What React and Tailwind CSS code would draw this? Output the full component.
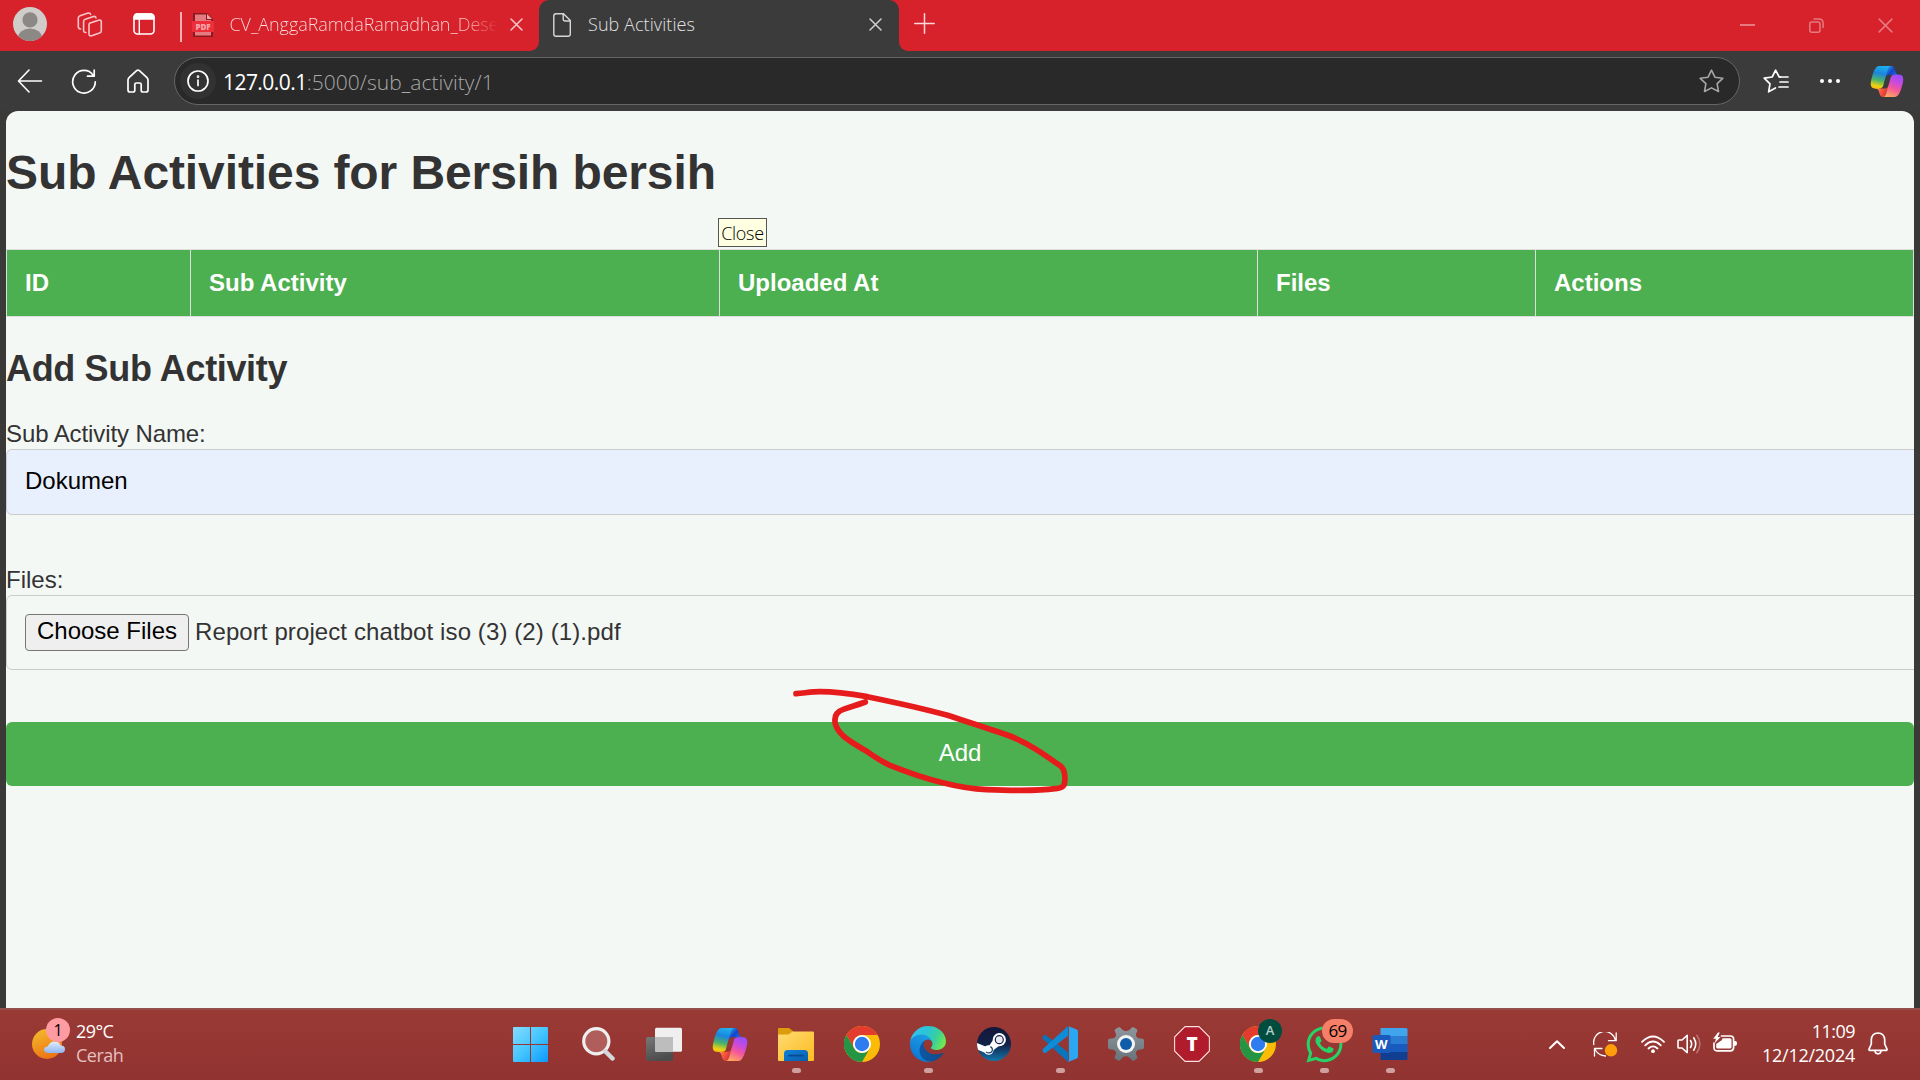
import React from 'react';
import { FaWhatsapp } from 'react-icons/fa';

const stroke = { fill: 'none', stroke: 'currentColor', strokeLinecap: 'round', strokeLinejoin: 'round' };

/* ---------- shared logos ---------- */

function CopilotLogo({ id, className }) {
  return (
    <svg className={className} viewBox="1 4 46 40" preserveAspectRatio="none">
      <defs>
        <linearGradient id={`${id}a`} x1="0.9" y1="0.6" x2="0.2" y2="0">
          <stop offset="0" stopColor="#2a6be8" />
          <stop offset="0.5" stopColor="#1145c9" />
          <stop offset="1" stopColor="#2a9be8" />
        </linearGradient>
        <linearGradient id={`${id}b`} x1="0" y1="0.3" x2="1" y2="0.8">
          <stop offset="0" stopColor="#ffb657" />
          <stop offset="0.4" stopColor="#ff5f3d" />
          <stop offset="1" stopColor="#c02b3c" />
        </linearGradient>
        <linearGradient id={`${id}c`} x1="0.6" y1="0" x2="0.4" y2="1">
          <stop offset="0" stopColor="#1fb0ee" />
          <stop offset="0.35" stopColor="#1b85dd" />
          <stop offset="0.65" stopColor="#4bb26a" />
          <stop offset="0.9" stopColor="#e4d215" />
          <stop offset="1" stopColor="#fbc40c" />
        </linearGradient>
        <linearGradient id={`${id}d`} x1="0.7" y1="0" x2="0.3" y2="1">
          <stop offset="0" stopColor="#9a4dff" />
          <stop offset="0.3" stopColor="#c64ade" />
          <stop offset="0.6" stopColor="#f4579c" />
          <stop offset="1" stopColor="#ffa85c" />
        </linearGradient>
      </defs>
      <path fill={`url(#${id}a)`} d="M34.14 7.33C33.56 5.35 31.75 4 29.69 4L28.33 4C26.1 4 24.19 5.59 23.79 7.78L21.43 20.62L22.02 18.62C22.6 16.62 24.43 15.25 26.51 15.25L34.44 15.25L37.78 16.55L41 15.25H40.07C38.01 15.25 36.2 13.9 35.62 11.93Z" />
      <path fill={`url(#${id}b)`} d="M14.33 40.66C14.9 42.64 16.72 44 18.78 44H21.66C24.17 44 26.22 41.99 26.28 39.48L26.59 27.33L25.94 29.56C25.35 31.55 23.52 32.92 21.45 32.92L13.45 32.92L10.59 31.38L7.5 32.92H8.43C10.49 32.92 12.3 34.29 12.88 36.27Z" />
      <path fill={`url(#${id}c)`} d="M29.5 4H13.46C8.88 4 6.13 10.05 4.3 16.11C2.13 23.28-.71 32.88 7.5 32.88H14.43C16.5 32.88 18.32 31.52 18.89 29.53C20.09 25.34 22.19 18.04 23.84 12.48C24.68 9.66 25.38 7.23 26.45 5.72C27.06 4.87 28.06 4 29.5 4Z" />
      <path fill={`url(#${id}d)`} d="M18.5 44H34.53C39.11 44 41.86 37.95 43.7 31.89C45.87 24.72 48.7 15.13 40.49 15.13H33.57C31.5 15.13 29.68 16.49 29.1 18.48C27.9 22.67 25.8 29.96 24.15 35.52C23.32 38.34 22.62 40.77 21.54 42.28C20.94 43.13 19.94 44 18.5 44Z" />
    </svg>
  );
}

function ChromeLogo() {
  return (
    <svg className="h-9 w-9" viewBox="0 0 48 48">
      <circle cx="24" cy="24" r="24" fill="#fbbc08" />
      <path fill="#e33b2e" d="M3.2 12A24 24 0 0 1 44.8 12H24A12 12 0 0 0 13.6 30Z" />
      <path fill="#249445" d="M3.2 12A24 24 0 0 0 24 48L34.4 30A12 12 0 0 1 13.6 30Z" />
      <circle cx="24" cy="24" r="12" fill="#fff" />
      <circle cx="24" cy="24" r="9.6" fill="#2f7bf0" />
    </svg>
  );
}

function EdgeLogo() {
  return (
    <svg className="h-9 w-9" viewBox="0 0 256 256">
      <defs>
        <linearGradient id="edgeDark" x1="0" y1="0.5" x2="1" y2="0.6">
          <stop offset="0" stopColor="#0c59a4" />
          <stop offset="1" stopColor="#114a8b" />
        </linearGradient>
        <linearGradient id="edgeMid" x1="0.7" y1="0.1" x2="0.3" y2="1">
          <stop offset="0" stopColor="#1b9de2" />
          <stop offset="0.5" stopColor="#1588db" />
          <stop offset="1" stopColor="#0a74d4" />
        </linearGradient>
        <linearGradient id="edgeTop" x1="0" y1="0.3" x2="1" y2="0.6">
          <stop offset="0" stopColor="#35c1f1" />
          <stop offset="0.4" stopColor="#2cc4d6" />
          <stop offset="0.7" stopColor="#36d0a0" />
          <stop offset="1" stopColor="#74e84a" />
        </linearGradient>
      </defs>
      <path fill="url(#edgeDark)" d="M231 190.5c-3.4 1.8-6.9 3.4-10.5 4.7a101.5 101.5 0 0 1-35.9 6.4c-47.3 0-88.5-32.5-88.5-74.3a31.5 31.5 0 0 1 16.4-27.3c-42.8 1.8-53.8 46.4-53.8 72.5 0 73.9 68.1 81.4 82.8 81.4 7.9 0 19.8-2.3 27-4.6l1.3-.4a128.3 128.3 0 0 0 66.6-52.8 4 4 0 0 0-5.4-5.6Z" />
      <path fill="url(#edgeMid)" d="M105.7 241.4a79.2 79.2 0 0 1-22.7-21.3 80.7 80.7 0 0 1 29.5-120c3.2-1.5 8.5-4.1 15.6-4a32.4 32.4 0 0 1 25.7 13 31.9 31.9 0 0 1 6.3 18.7c0-.2 24.5-79.6-80-79.6-43.9 0-80 41.6-80 78.2a130.2 130.2 0 0 0 12.1 56 128 128 0 0 0 156.4 67 75.5 75.5 0 0 1-62.8-8Z" />
      <path fill="url(#edgeTop)" d="M152.3 148.9c-.9 1-3.4 2.5-3.4 5.7 0 2.6 1.7 5.2 4.8 7.3 14.3 10 41.4 8.6 41.5 8.6a59.6 59.6 0 0 0 30.3-8.3 61.4 61.4 0 0 0 30.4-52.9c.3-22.4-8-37.3-11.3-43.9C223.5 23.9 177.7 0 128 0A128 128 0 0 0 0 126.2c.5-36.5 36.8-66 80-66 3.5 0 23.5.3 42 10.1 16.3 8.6 24.9 18.9 30.8 29.2 6.2 10.7 7.3 24.1 7.3 29.5 0 5.3-2.7 13.3-7.8 19.9Z" />
    </svg>
  );
}

/* ---------- browser chrome ---------- */

function CloseX({ className, w = 1.5 }) {
  return (
    <svg className={className} viewBox="0 0 13 13" {...stroke} strokeWidth={w}>
      <path d="M1 1l11 11M12 1L1 12" />
    </svg>
  );
}

function TabStrip() {
  return (
    <div className="flex h-[51px] bg-[#3b3b3b]">
      <div className="flex w-[539px] items-start rounded-br-[9px] bg-[#d7222c] pl-[13px]">
        <svg className="mt-[7px] h-[34px] w-[34px]" viewBox="0 0 34 34">
          <defs>
            <clipPath id="avatarClip"><circle cx="17" cy="17" r="17" /></clipPath>
          </defs>
          <g clipPath="url(#avatarClip)">
            <rect width="34" height="34" fill="#cfccc9" />
            <circle cx="17" cy="12.8" r="7.6" fill="#8b8885" />
            <ellipse cx="17" cy="31" rx="12" ry="9.5" fill="#8b8885" />
          </g>
        </svg>
        <svg className="ml-[30px] mt-3 h-[25px] w-[26px] text-[#f7c5c8]" viewBox="0 0 26 25" {...stroke} strokeWidth="1.6">
          <path d="M12.5 11.2L21.5 8.2Q24.3 7.4 24.3 10V18.5Q24.3 20.4 22.5 21.1L14.7 23.8Q12 24.5 12 22V12.9Q12 11.5 13 11.1Z" />
          <path d="M8.9 20.5Q6.6 20.6 6.6 18.2V9.6Q6.6 7.8 8.3 7.2L16.5 4.5Q18.4 4.1 19 5.8" />
          <path d="M3.6 17Q1.3 17 1.3 14.6V6.2Q1.3 4.4 3 3.8L11.2 1.1Q13 .7 13.6 2.3" />
        </svg>
        <svg className="ml-[30px] mt-[13px] h-[22px] w-[22px] text-white" viewBox="0 0 22 22" {...stroke} strokeWidth="1.6">
          <rect x="1" y="1" width="20" height="20" rx="3.5" />
          <path d="M1.2 6V4Q1.5 1.2 4 1H18Q20.8 1.3 20.9 4V6Z" fill="currentColor" />
          <path d="M6.3 6V21" strokeWidth="1.4" />
        </svg>
        <div className="ml-[25px] mt-3 h-[30px] w-[1.5px] bg-[#f0b0b4]" />
        <svg className="ml-[10px] mt-[13px] h-6 w-[22px]" viewBox="0 0 22 24">
          <path fill="#8e1820" d="M1 0H15L21 6V24H1Z" />
          <path fill="#e57b80" d="M3 1.5H14V7H19V22.5H3Z" />
          <path fill="#f0a7aa" d="M15 1L20 6H15Z" />
          <rect y="8" width="22" height="11" rx="1" fill="#ec2f3b" />
          <text x="11" y="16.6" textAnchor="middle" fontFamily="Open Sans, sans-serif" fontWeight="800" fontSize="8" fill="#f7a3a8">PDF</text>
        </svg>
        <div className="ml-4 mt-[11px] w-[267px] overflow-hidden whitespace-nowrap bg-gradient-to-r from-[#fbdcde] from-85% to-[#d7222c] bg-clip-text text-[18px] font-light leading-[26px] tracking-[-0.06px] text-transparent">
          CV_AnggaRamdaRamadhan_Dese
        </div>
        <CloseX className="ml-[13px] mt-[18px] h-[13px] w-[13px] text-[#f8c9cc]" />
      </div>

      <div className="flex w-[360px] bg-[#d7222c]">
        <div className="flex flex-1 items-start rounded-t-[10px] bg-[#3b3b3b] pl-3.5">
          <svg className="mt-[13px] h-6 w-[18px] text-[#d8d8d8]" viewBox="0 0 18 24" {...stroke} strokeWidth="1.4">
            <path d="M3 .8H10.5L17.3 7.6V21Q17.3 23.2 15 23.2H3Q.8 23.2 .8 21V3Q.8 .8 3 .8Z" />
            <path d="M10.2 1V6Q10.2 8 12.2 8H17" />
          </svg>
          <div className="ml-[17px] mt-[11px] flex-1 text-[18px] font-light leading-[26px] tracking-[0.07px] text-[#e0e0e0]">Sub Activities</div>
          <CloseX className="mr-[17px] mt-[18px] h-[13px] w-[13px] text-[#cfcfcf]" />
        </div>
      </div>

      <div className="flex flex-1 items-start rounded-bl-[9px] bg-[#d7222c] pl-[15px]">
        <svg className="mt-[13px] h-[21px] w-[21px] text-[#fbd9db]" viewBox="0 0 21 21" {...stroke} strokeWidth="1.5">
          <path d="M10.5 .8V20.2M.8 10.5H20.2" />
        </svg>
        <div className="flex-1" />
        <div className="mt-6 h-[2px] w-[15px] bg-[#e57a80]" />
        <svg className="ml-[54px] mt-[18px] h-[15px] w-[15px] text-[#e57a80]" viewBox="0 0 15 15" {...stroke} strokeWidth="1.5">
          <rect x=".8" y="4" width="10.2" height="10.2" rx="2" />
          <path d="M5 .9H10Q14.1 .9 14.1 5V9.5" />
        </svg>
        <CloseX className="ml-[54px] mr-[27px] mt-[18px] h-[15px] w-[15px] text-[#e57a80]" w={1.3} />
      </div>
    </div>
  );
}

function Toolbar() {
  return (
    <div className="flex h-[60px] items-center bg-[#3b3b3b] pl-[17px] text-white">
      <svg className="h-6 w-[26px]" viewBox="0 0 26 24" {...stroke} strokeWidth="1.6">
        <path d="M12 1L1.5 12L12 23M1.5 12H24.5" />
      </svg>
      <svg className="ml-[28px] h-[25px] w-[26px]" viewBox="0 0 26 25" {...stroke} strokeWidth="1.7">
        <path d="M22.2 6.2A11.3 11.3 0 1 0 24.3 12.8M23.2 1V7.2H16.5" />
      </svg>
      <svg className="ml-[30px] h-[24px] w-[22px]" viewBox="0 0 22 24" {...stroke} strokeWidth="1.7">
        <path d="M2.3 8.3L9.6 1.6Q11 .5 12.4 1.6L19.7 8.3Q21 9.5 21 11V21Q21 23 19 23H16Q14.2 23 14.2 21.2V15.5Q14.2 14 12.8 14H9.2Q7.8 14 7.8 15.5V21.2Q7.8 23 6 23H3Q1 23 1 21V11Q1 9.5 2.3 8.3Z" />
      </svg>
      <div className="ml-[25px] flex h-[48px] w-[1566px] items-center rounded-full border-[1.5px] border-[#666] bg-[#292929] pl-[5px]">
        <div className="flex h-9 w-9 items-center justify-center rounded-full bg-[#323232]">
          <svg className="h-[22px] w-[22px]" viewBox="0 0 22 22" {...stroke} strokeWidth="1.7">
            <circle cx="11" cy="11" r="10" />
            <path d="M11 10V15.5" />
            <circle cx="11" cy="6.7" r=".5" />
          </svg>
        </div>
        <div className="ml-[7px] flex-1 pt-[1px] text-[21px] leading-7">
          <span className="tracking-[-0.55px]">127.0.0.1</span>
          <span className="font-light tracking-[0.03px] text-[#a8a8a8]">:5000/sub_activity/1</span>
        </div>
        <svg className="mr-[15px] h-6 w-[25px] text-[#a6a6a6]" viewBox="0 0 25 24" {...stroke} strokeWidth="1.6">
          <path d="M12.5 1.2L15.9 8.2L23.8 9.3L18.1 14.7L19.5 22.5L12.5 18.9L5.5 22.5L6.9 14.7L1.2 9.3L9.1 8.2Z" />
        </svg>
      </div>
      <svg className="ml-[23px] h-6 w-[26px]" viewBox="0 0 26 24" {...stroke} strokeWidth="1.7">
        <path d="M17.5 8H16.2L12.6 1.2L9.2 8L1.2 9.2L7 14.8L5.6 22.8L12.5 19" />
        <path d="M17 8H25M17 13H25M16 18H25" />
      </svg>
      <div className="ml-[31px] flex gap-1">
        <i className="h-1 w-1 rounded-full bg-white" />
        <i className="h-1 w-1 rounded-full bg-white" />
        <i className="h-1 w-1 rounded-full bg-white" />
      </div>
      <CopilotLogo id="tb" className="ml-[30px] h-[31px] w-[34px]" />
    </div>
  );
}

/* ---------- web page ---------- */

function Page() {
  return (
    <div className="relative flex-1 bg-[#3b3838] px-1.5">
      <div className="h-full overflow-hidden rounded-t-[12px] bg-[#f3f8f5] pt-[38px] font-['Liberation_Sans',Arial,sans-serif] text-[24px] text-[#333]">
        <h1 className="whitespace-nowrap text-[48px] font-bold leading-[48px] tracking-[-0.1px]">Sub Activities for Bersih bersih</h1>

        <div className="mt-[52px] grid h-[68px] w-[1908px] grid-cols-[184px_529px_538px_278px_378px] border border-[#ddd] bg-[#4caf50] font-bold leading-[27px] text-white">
          <div className="flex items-center border-r border-[#ddd] pb-[2px] pl-[18px]">ID</div>
          <div className="flex items-center border-r border-[#ddd] pb-[2px] pl-[18px]">Sub Activity</div>
          <div className="flex items-center border-r border-[#ddd] pb-[2px] pl-[18px]">Uploaded At</div>
          <div className="flex items-center border-r border-[#ddd] pb-[2px] pl-[18px]">Files</div>
          <div className="flex items-center pb-[2px] pl-[18px]">Actions</div>
        </div>

        <h2 className="mt-[34px] text-[36px] font-bold leading-9 tracking-[-0.35px]">Add Sub Activity</h2>

        <label className="mt-[33px] block leading-[27px] tracking-[-0.1px]">Sub Activity Name:</label>
        <div className="mt-[2px] flex h-[66px] w-[1946px] items-center rounded-[6px] border border-[#ccc] bg-[#e8effd] pb-[2px] pl-[18px] text-black">
          Dokumen
        </div>

        <label className="mt-[51px] block leading-[27px]">Files:</label>
        <div className="mt-[2px] flex h-[75px] w-[1946px] items-center rounded-[6px] border border-[#ccc] pl-[18px]">
          <div className="flex h-[37px] w-[164px] items-center justify-center whitespace-nowrap rounded-[4px] border border-[#767676] bg-[#efefef] pb-[4px] text-black">
            Choose Files
          </div>
          <div className="ml-[6px] pb-[2px] tracking-[0.1px]">Report project chatbot iso (3) (2) (1).pdf</div>
        </div>

        <div className="mt-[52px] flex h-16 items-center justify-center rounded-[6px] bg-[#4caf50] pb-[3px] text-white">Add</div>
      </div>

      <div className="absolute left-[718px] top-[107px] flex h-[29px] w-[49px] items-center justify-center border border-[#555] bg-[#ffffe1] pt-[1px] text-[18px] font-light leading-none tracking-[-0.3px] text-black">
        Close
      </div>

      <svg className="absolute left-[780px] top-[559px] h-[140px] w-[320px]" viewBox="0 0 960 420" fill="none" stroke="#e61c1c" strokeWidth="17" strokeLinecap="round" strokeLinejoin="round">
        <path d="M48 71C75 69 95 65 120 65C170 65 215 72 262 80C340 96 420 113 500 135C560 155 640 180 690 198C750 222 795 255 843 289C856 300 857 330 852 345C847 355 835 355 825 356C770 364 700 362 620 359C520 354 420 322 330 286C290 268 275 252 250 238C215 216 180 200 167 165C160 140 170 125 190 118C215 109 235 104 256 96" />
      </svg>
    </div>
  );
}

/* ---------- taskbar ---------- */

function App66({ running, children }) {
  return (
    <div className="relative flex w-[66px] items-center justify-center">
      {children}
      {running && <i className="absolute bottom-[5px] h-[5px] w-[9px] rounded-full bg-[#d0a09f]" />}
    </div>
  );
}

function Gear() {
  return (
    <svg className="h-9 w-9" viewBox="0 0 36 36">
      <defs>
        <linearGradient id="gear" x1="0" y1="0" x2="0" y2="1">
          <stop offset="0" stopColor="#8d969c" />
          <stop offset="1" stopColor="#68737b" />
        </linearGradient>
      </defs>
      <path fill="url(#gear)" d="M12 1.3Q10.8.8 9.5 1.8L7.2 3.3Q6.3 4.2 6.8 5.3L8 8Q8.3 11.2 5.5 12.2L1.5 12.8Q.2 13.1 0 14.4V21.5Q.2 22.9 1.5 23.2L5.5 23.8Q8.3 24.8 8 28L6.8 30.7Q6.3 31.8 7.2 32.7L9.8 34.4Q11 35 12 34.2L14.3 31.7Q18 28.8 21.7 31.7L24 34.2Q25 35 26.2 34.4L28.8 32.7Q29.7 31.8 29.2 30.7L28 28Q27.7 24.8 30.5 23.8L34.5 23.2Q35.8 22.9 36 21.5V14.4Q35.8 13.1 34.5 12.8L30.5 12.2Q27.7 11.2 28 8L29.2 5.3Q29.7 4.2 28.8 3.3L26.5 1.8Q25.2.8 24 1.3L21.7 3.8Q18 6.7 14.3 3.8Z" />
      <circle cx="18" cy="18" r="9" fill="#f3f3f3" />
      <circle cx="18" cy="18" r="6" fill="#0f5ca8" />
    </svg>
  );
}

function Apps() {
  return (
    <div className="flex">
      <App66>
        <svg className="mr-[3px] h-[35px] w-[35px]" viewBox="0 0 35 35">
          <defs>
            <linearGradient id="win" gradientUnits="userSpaceOnUse" x1="0" y1="0" x2="35" y2="35">
              <stop offset="0" stopColor="#86dcff" />
              <stop offset="0.5" stopColor="#45c6ff" />
              <stop offset="1" stopColor="#0c98fc" />
            </linearGradient>
          </defs>
          <path fill="url(#win)" d="M1 0H17V17H0V1Q0 0 1 0ZM18 0H34Q35 0 35 1V17H18ZM0 18H17V35H1Q0 35 0 34ZM18 18H35V34Q35 35 34 35H18Z" />
        </svg>
      </App66>
      <App66>
        <svg className="h-[34px] w-[33px]" viewBox="0 0 33 34">
          <circle cx="14.3" cy="14.3" r="12.6" fill="#b05e5c" stroke="#efefef" strokeWidth="3.2" />
          <path d="M23.5 24.5L30.5 31.5" stroke="#d3d8da" strokeWidth="4.5" strokeLinecap="round" />
        </svg>
      </App66>
      <App66>
        <svg className="h-[34px] w-9" viewBox="0 0 36 34">
          <defs>
            <linearGradient id="tvDark" x1="0" y1="0" x2="0.4" y2="1">
              <stop offset="0" stopColor="#777" />
              <stop offset="1" stopColor="#4c4c4c" />
            </linearGradient>
          </defs>
          <rect y="10" width="27" height="24" rx="2" fill="url(#tvDark)" />
          <rect x="9" y="0.7" width="27" height="24" rx="1.5" fill="#efefef" />
          <path d="M9 10H27V24.7H10.5Q9 24.7 9 23.2Z" fill="#bdbdbd" />
        </svg>
      </App66>
      <App66><CopilotLogo id="tk" className="h-[33px] w-9" /></App66>
      <App66 running>
        <svg className="h-[34px] w-9" viewBox="0 0 36 34">
          <defs>
            <linearGradient id="folder" x1="0" y1="0" x2="1" y2="1">
              <stop offset="0" stopColor="#ffda72" />
              <stop offset="1" stopColor="#fcbc20" />
            </linearGradient>
            <linearGradient id="folderTab" x1="0" y1="0" x2="1" y2="1">
              <stop offset="0" stopColor="#0f82d8" />
              <stop offset="1" stopColor="#0a5cae" />
            </linearGradient>
          </defs>
          <path fill="#dd9c0b" d="M0 2Q0 1 1 1H11L15.5 4.5L12 9H0Z" />
          <path fill="url(#folder)" d="M0 7.5H9.5Q11 7.5 12 6.5L14.5 4.5H35Q36 4.5 36 5.5V33Q36 34 35 34H1Q0 34 0 33Z" />
          <path fill="url(#folderTab)" d="M6 34V26.5Q6 23 9.5 23H26.5Q30 23 30 26.5V34Z" />
          <path d="M11 28.7H25" stroke="#084a8c" strokeWidth="1.8" strokeLinecap="round" />
        </svg>
      </App66>
      <App66><ChromeLogo /></App66>
      <App66 running><EdgeLogo /></App66>
      <App66>
        <svg className="h-[34px] w-[34px]" viewBox="0 0 34 34">
          <defs>
            <linearGradient id="steam" x1="0" y1="0" x2="0" y2="1">
              <stop offset="0" stopColor="#13183a" />
              <stop offset="0.5" stopColor="#112147" />
              <stop offset="1" stopColor="#1276ad" />
            </linearGradient>
            <clipPath id="steamClip"><circle cx="17" cy="17" r="17" /></clipPath>
          </defs>
          <circle cx="17" cy="17" r="17" fill="url(#steam)" />
          <g clipPath="url(#steamClip)">
            <path d="M-1 15.5L11 20.5L16 13L22 19L14.5 24.5L11 27L-1 22Z" fill="#fff" />
            <circle cx="22.3" cy="12.7" r="6.6" fill="#fff" />
            <circle cx="11.7" cy="23" r="4.8" fill="#fff" />
            <circle cx="22.3" cy="12.7" r="4" fill="#e9eaf0" stroke="#16204a" strokeWidth="1.2" />
            <path d="M9 25Q12.5 27.2 15 24.5Q16.3 21.2 13.3 19.6" fill="none" stroke="#17416f" strokeWidth="1.2" />
          </g>
        </svg>
      </App66>
      <App66 running>
        <svg className="h-9 w-9" viewBox="0 0 36 36">
          <path fill="#0a74bd" d="M1.6 9.6Q2.8 8.6 4.3 9.5L26 26.2V36L1.2 13.2Q-.2 11.4 1.6 9.6Z" />
          <path fill="#0f8cd8" d="M1.6 26.4Q2.8 27.4 4.3 26.5L26 9.8V0L1.2 22.8Q-.2 24.6 1.6 26.4Z" />
          <path fill="#2aa7f2" d="M26 0L34.8 3.6Q36 4.2 36 5.6V30.4Q36 31.8 34.8 32.4L26 36Q25.3 35.6 26.9 35V1Q27 0 26 0Z" />
        </svg>
      </App66>
      <App66><Gear /></App66>
      <App66>
        <svg className="h-9 w-9" viewBox="0 0 36 36">
          <path d="M11 .6H25L35.4 11V25L25 35.4H11L.6 25V11Z" fill="#b01c2c" stroke="#f6dfe0" strokeWidth="1.1" />
          <text x="18" y="24.6" textAnchor="middle" fontFamily="Open Sans, sans-serif" fontWeight="800" fontSize="19" fill="#fff">T</text>
        </svg>
      </App66>
      <App66 running>
        <ChromeLogo />
        <div className="absolute left-[33px] top-[9px] flex h-6 w-6 items-center justify-center rounded-full bg-[#004d40] text-[13px] font-semibold text-[#b5cfca]">A</div>
      </App66>
      <App66 running>
        <FaWhatsapp className="h-[41px] w-[41px] text-[#25d366]" />
        <div className="absolute left-[31px] top-[9px] flex h-6 w-[31px] items-center justify-center rounded-full bg-[#f57f68] text-[17px] tracking-[-0.8px] text-black">69</div>
      </App66>
      <App66 running>
        <svg className="h-9 w-9" viewBox="0 0 36 36">
          <path fill="#41a5ee" d="M9 2H34Q35.5 2 35.5 3.5V10H8.5V3Q8.5 2 9 2Z" />
          <path fill="#2b7cd3" d="M8.5 10H35.5V18H8.5Z" />
          <path fill="#185abd" d="M8.5 18H35.5V26H8.5Z" />
          <path fill="#103f91" d="M8.5 26H35.5V32.5Q35.5 34 34 34H10Q8.5 34 8.5 32.5Z" />
          <rect x=".5" y="9" width="18" height="18" rx="1.5" fill="#1b5abd" />
          <text x="9.4" y="22.8" textAnchor="middle" fontFamily="Open Sans, sans-serif" fontWeight="700" fontSize="13" fill="#fff">W</text>
        </svg>
      </App66>
    </div>
  );
}

function Tray() {
  return (
    <div className="flex items-center text-white">
      <svg className="h-[9px] w-4" viewBox="0 0 16 9" {...stroke} strokeWidth="2">
        <path d="M1 8L8 1.3L15 8" />
      </svg>
      <svg className="ml-[28px] h-[25px] w-[25px]" viewBox="0 0 25 25" {...stroke} strokeWidth="1.3">
        <path d="M.8 12.5A11 11 0 0 1 22.5 8.5M23.2 1V8.7H15.5" />
        <path d="M1.5 24V16.5H9M2 17.5Q5.5 23.5 12.5 24" />
        <circle cx="18" cy="18.3" r="6.2" fill="#ff9d0a" stroke="none" />
      </svg>
      <svg className="ml-[23px] h-[19px] w-6" viewBox="0 0 24 19" {...stroke} strokeWidth="1.8">
        <path d="M1 6.8Q12-3.8 23 6.8M4.2 10.3Q12 2.8 19.8 10.3M7.5 13.5Q12 9.2 16.5 13.5" />
        <circle cx="12" cy="16.2" r="1.9" fill="currentColor" stroke="none" />
      </svg>
      <svg className="ml-3 h-5 w-[25px]" viewBox="0 0 25 20" {...stroke} strokeWidth="1.6">
        <path d="M1 6.8Q1 6 1.8 6H5L10.2 1.4V18.6L5 14H1.8Q1 14 1 13.2Z" />
        <path d="M13.5 6.5Q15.8 10 13.5 13.5M16.7 3.8Q20.8 10 16.7 16.2" />
        <path d="M19.8 1.3Q26 10 19.8 18.7" stroke="#b87270" />
      </svg>
      <svg className="mb-[3px] ml-[11px] h-[21px] w-6" viewBox="0 0 24 21">
        <path d="M8.5 4H17.5Q20.6 4 20.6 7V15.5Q20.6 18.8 17.5 18.8H4Q1 18.8 1 15.5V11" fill="none" stroke="#fff" strokeWidth="1.7" strokeLinecap="round" />
        <path d="M9.5 6.2H17Q18.5 6.2 18.5 7.8V15Q18.5 16.6 17 16.6H4.5Q3.2 16.6 3.2 15V12L9 8Z" fill="#fff" />
        <path d="M21 9H22.8Q24 9.5 24 11.4Q24 13.3 22.8 13.8H21Z" fill="#fff" />
        <path d="M5 .5L.2 6.8H3L1.5 11.5L7.5 5H4.7L6.8.5Z" fill="#fff" />
      </svg>
      <div className="mb-[2px] ml-[20px] w-[98px] text-right text-[18px] leading-6">
        <div className="tracking-[-0.55px]">11:09</div>
        <div className="tracking-[-0.25px]">12/12/2024</div>
      </div>
      <svg className="mb-[2px] ml-[13px] h-[23px] w-5" viewBox="0 0 20 23" {...stroke} strokeWidth="1.7">
        <path d="M10 1Q16.3 1.2 16.7 7.8V12L19 17.2Q19.2 18.2 18.2 18.4H1.8Q.8 18.2 1 17.2L3.3 12V7.8Q3.7 1.2 10 1Z" />
        <path d="M7 19Q7.3 21.8 10 21.8T13 19" />
      </svg>
    </div>
  );
}

function Taskbar() {
  return (
    <div className="flex h-[72px] border-t-2 border-[#934e4b] bg-gradient-to-b from-[#9a3a35] to-[#913331] pb-[2px]">
      <div className="flex w-[499px] items-center pl-8">
        <div className="relative mb-[11px] h-[42px] w-[38px]">
          <svg className="h-[42px] w-[38px]" viewBox="0 0 38 42">
            <defs>
              <linearGradient id="sun" x1="0.2" y1="0" x2="0.6" y2="1">
                <stop offset="0" stopColor="#f3bb2c" />
                <stop offset="1" stopColor="#ee7113" />
              </linearGradient>
              <linearGradient id="cloud" x1="0" y1="0" x2="0" y2="1">
                <stop offset="0" stopColor="#e3edfc" />
                <stop offset="1" stopColor="#8fb4f0" />
              </linearGradient>
            </defs>
            <circle cx="15" cy="26" r="15" fill="url(#sun)" />
            <path fill="url(#cloud)" d="M16 35Q12 34.5 12 31.5Q12.3 28.6 15.8 28.6Q18 23 23.5 23.6Q27.5 24.2 28.8 27.6Q33 27.5 33 31.2Q32.8 35 29 35Z" />
          </svg>
          <div className="absolute left-3.5 top-0 flex h-6 w-6 items-center justify-center rounded-full bg-[#ff9ba3] text-[16px] text-black">1</div>
        </div>
        <div className="mb-[2px] ml-1.5 text-[18px] leading-6 text-white">
          <div className="tracking-[-0.6px]">29°C</div>
          <div className="tracking-[-0.5px] text-[#e3c0bf]">Cerah</div>
        </div>
      </div>
      <Apps />
      <div className="flex flex-1 justify-end pr-8"><Tray /></div>
    </div>
  );
}

export default function App() {
  return (
    <div className="flex h-[1080px] w-[1920px] flex-col overflow-hidden bg-[#3b3b3b] font-['Open_Sans','Noto_Sans',sans-serif]">
      <TabStrip />
      <Toolbar />
      <Page />
      <Taskbar />
    </div>
  );
}
